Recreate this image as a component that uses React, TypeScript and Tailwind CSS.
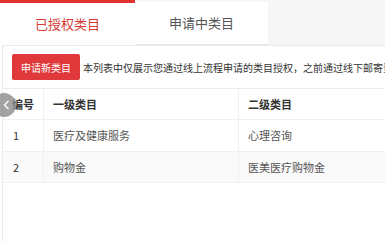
import React from 'react';

const rows = [
  { id: '1', first: '医疗及健康服务', second: '心理咨询' },
  { id: '2', first: '购物金', second: '医美医疗购物金' },
];

export default function App() {
  return (
    <div className="relative w-[385px] h-[242px] overflow-hidden bg-white font-['Noto_Sans_CJK_SC',sans-serif]">
      {/* Tabs */}
      <div className="flex h-[45px] bg-[#f6f6f6]">
        <div className="w-[135px] bg-white border-t-[3px] border-[#e0312f] flex items-center justify-center text-[13px] text-[#d63a35]">
          已授权类目
        </div>
        <div className="w-[133px] mt-[2px] bg-white border-b border-[#e6e6e6] flex items-center justify-center text-[13px] text-[#555]">
          申请中类目
        </div>
      </div>

      {/* Panel */}
      <div className="ml-[2px] border-l border-t border-[#ececec] min-h-[197px]">
        <div className="flex items-center h-[43px] pl-[9px] border-b border-[#ececec] whitespace-nowrap">
          <button className="h-[26px] w-[68px] shrink-0 rounded-[2px] bg-[#e0393b] text-white text-[10px]">
            申请新类目
          </button>
          <span className="ml-[3px] text-[10px] text-[#333]">
            本列表中仅展示您通过线上流程申请的类目授权，之前通过线下邮寄资质申请的类目授权请联系客服查询
          </span>
        </div>

        <div className="grid grid-cols-[41px_195px_1fr] h-[31px] items-center border-b border-[#f0f0f0] text-[11px] font-bold text-[#333]">
          <div className="pl-[9px] h-full flex items-center border-r border-[#f0f0f0]">编号</div>
          <div className="pl-[9px] h-full flex items-center border-r border-[#f0f0f0]">一级类目</div>
          <div className="pl-[9px] h-full flex items-center">二级类目</div>
        </div>
        {rows.map((r, i) => (
          <div
            key={r.id}
            className={`grid grid-cols-[41px_195px_1fr] items-center border-b border-[#f0f0f0] text-[11px] text-[#555] ${i % 2 ? 'h-[31px] bg-[#fafafa]' : 'h-[32px] bg-white'}`}
          >
            <div className="pl-[10px] h-full flex items-center border-r border-[#f0f0f0] text-[#333]">{r.id}</div>
            <div className="pl-[9px] h-full flex items-center border-r border-[#f0f0f0]">{r.first}</div>
            <div className="pl-[9px] h-full flex items-center">{r.second}</div>
          </div>
        ))}
      </div>

      {/* Floating back handle */}
      <div className="absolute left-[-8px] top-[93px] w-[24px] h-[24px] rounded-full bg-[#8c8c8c]/80 flex items-center justify-end pr-[6px]">
        <svg width="7" height="10" viewBox="0 0 7 10" fill="none">
          <path d="M5.5 1 L1.5 5 L5.5 9" stroke="white" strokeWidth="1.3" />
        </svg>
      </div>
    </div>
  );
}
